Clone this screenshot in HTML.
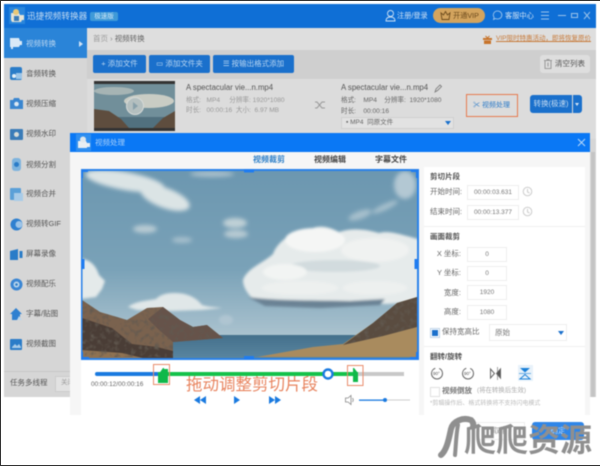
<!DOCTYPE html>
<html lang="zh"><head><meta charset="utf-8"><title>视频处理</title>
<style>
html,body{margin:0;padding:0}
body{width:600px;height:466px;position:relative;overflow:hidden;background:#fff;font-family:"Liberation Sans","Noto Sans CJK SC",sans-serif;color:#555}
#w{position:absolute;left:0;top:0;width:600px;height:466px;filter:blur(.4px)}
.a{position:absolute;white-space:nowrap}
.t{position:absolute;white-space:nowrap;line-height:12px;font-size:7.5px}
.btn{position:absolute;background:#1a70cc;border-radius:2px;color:#b9d6f2;font-size:7.5px;line-height:18px;text-align:center;top:55px;height:18px}
.nav{position:absolute;left:26px;font-size:7.5px;line-height:12px;color:#555;white-space:nowrap}
.ic{position:absolute;left:10px}
.inp{position:absolute;background:#fff;border:1px solid #eee;box-sizing:border-box;font-size:6.5px;color:#777;text-align:center}
.lab{position:absolute;white-space:nowrap;font-size:7.5px;color:#666;line-height:12px;text-align:right}
.h{position:absolute;left:430px;font-size:7.5px;font-weight:bold;color:#555;line-height:12px;white-space:nowrap}
</style></head><body>
<div id="w">
<!-- app -->
<div class="a" style="left:4px;top:4px;width:592px;height:393px;background:#d6d6d6"></div>
<div class="a" style="left:4px;top:4px;width:592px;height:24px;background:#0f6fd6"></div>
<div class="a" style="left:9px;top:7px;width:16px;height:17px;background:#2a86dc"></div>
<svg class="a" style="left:9px;top:7px" width="16" height="17"><path d="M2 6h8l1 2h4v5H13l-1 2H3l-1-2z" fill="#e4e4d8"/><circle cx="7" cy="5" r="3" fill="#e8c878"/><rect x="5" y="9" width="5" height="5" fill="#3a7cb8"/></svg>
<div class="t" style="left:27px;top:10px;font-size:8.6px;color:#c4dcf2">迅捷视频转换器</div>
<div class="a" style="left:90px;top:12px;width:28px;height:9px;background:#3f9ad8;border-radius:2px;color:#cfe6f5;font-size:6.5px;line-height:9px;text-align:center">极速版</div>

<svg class="a" style="left:385px;top:9px" width="12" height="14" fill="none" stroke="#cfe2f5" stroke-width=".9"><circle cx="5.500" cy="4.500" r="3"/><path d="M1 12c0-3 2-4 4.500-4s4.500 1 4.500 4z"/></svg>
<div class="t" style="left:397px;top:10px;color:#cfe2f5;font-size:7.2px">注册/登录</div>
<div class="a" style="left:433px;top:8px;width:52px;height:15px;border-radius:8px;background:#d3a45e"></div>
<svg class="a" style="left:440px;top:10px" width="11" height="11" fill="none" stroke="#6b4a1c" stroke-width=".9"><path d="M1 3l2.500 2L5.500 1.500 7.500 5 10 3 9 9.500H2z"/></svg>
<div class="t" style="left:453px;top:10px;color:#6b4a1c;font-size:7.2px">开通VIP</div>
<svg class="a" style="left:492px;top:10px" width="11" height="11" fill="none" stroke="#a9cdef" stroke-width=".8"><path d="M5.500 1a4.300 4 0 1 1-2 7.500L1.500 9.500l.6-2.200A4.300 4 0 0 1 5.500 1z"/></svg>
<div class="t" style="left:505px;top:10px;color:#cfe2f5;font-size:7.2px">客服中心</div>
<svg class="a" style="left:540px;top:10px" width="50" height="11" stroke="#9cc3ea" fill="none" stroke-width="1"><path d="M1 2h8M1 5.500h8M1 9h8M18 5.500h8"/><rect x="31.500" y="3.500" width="6" height="4"/><path d="M44 2l6 7M50 2l-6 7"/></svg>

<!-- sidebar -->
<div class="a" style="left:87px;top:28px;width:509px;height:22px;background:#dedede"></div>
<div class="a" style="left:87px;top:50px;width:509px;height:29px;background:#cfcfcf"></div>
<div class="a" style="left:87px;top:79px;width:509px;height:60px;background:#dcdcdc"></div>
<div class="a" style="left:4px;top:28px;width:83px;height:369px;background:#d6d6d6"></div>
<div class="a" style="left:4px;top:28px;width:83px;height:30px;background:#2a84d8"></div>
<svg class="a" style="left:9px;top:37px" width="13" height="13"><path d="M1 1h9l1 3h2v4h-2l-1 2H4v2H2v-2H1z" fill="#d9e9f7"/></svg>
<div class="nav" style="top:38px;color:#bcd7f0">视频转换</div>
<div class="a" style="left:79px;top:41px;width:0;height:0;border-left:4px solid #cfe2f5;border-top:3px solid transparent;border-bottom:3px solid transparent"></div>

<svg class="ic" style="top:67px" width="13" height="13"><rect width="12" height="13" rx="2" fill="#2a7cc8"/><rect x="6" y="6" width="6" height="6" fill="#9cc5e8"/><circle cx="4" cy="9" r="2" fill="#e4eef6"/></svg><div class="nav" style="top:68px">音频转换</div>
<svg class="ic" style="top:98px" width="13" height="11"><path d="M4 0h5l1 2h3v9H0V2h3z" fill="#3a86d0"/><circle cx="6.500" cy="6" r="2.300" fill="#dbe8f3"/></svg><div class="nav" style="top:98px">视频压缩</div>
<svg class="ic" style="top:128px" width="13" height="13"><rect y="1" width="13" height="11" rx="1" fill="#3a7cb8"/><circle cx="6.500" cy="6.500" r="2.500" fill="#d8dcd8"/></svg><div class="nav" style="top:128px">视频水印</div>
<svg class="ic" style="top:158px" width="13" height="13"><rect x="2" y="0" width="9" height="13" rx="3" fill="#7fb4de"/><circle cx="6.500" cy="6.500" r="2.500" fill="#2a7cc8"/></svg><div class="nav" style="top:159px">视频分割</div>
<svg class="ic" style="top:188px" width="13" height="13"><rect width="11" height="12" rx="1" fill="#5ba0d8"/><rect x="4" y="5" width="9" height="8" fill="#a8cbe8"/></svg><div class="nav" style="top:188px">视频合并</div>
<svg class="ic" style="top:218px" width="13" height="13"><circle cx="6.500" cy="6.500" r="6" fill="#2f80d0"/><circle cx="9" cy="6.500" r="3.500" fill="#9cc4e8"/></svg><div class="nav" style="top:218px">视频转GIF</div>
<svg class="ic" style="top:249px" width="13" height="11"><path d="M0 2l8-2v11H0z" fill="#2a7cc8"/><rect x="9.500" y="2" width="3" height="7" fill="#2a7cc8"/></svg><div class="nav" style="top:248px">屏幕录像</div>
<svg class="ic" style="top:278px" width="13" height="13"><circle cx="6.500" cy="6.500" r="6" fill="#3a86d4"/><circle cx="6.500" cy="6.500" r="3" fill="#bcd6ec"/><circle cx="6.500" cy="6.500" r="1.300" fill="#2a7cc8"/></svg><div class="nav" style="top:278px">视频配乐</div>
<svg class="a" style="left:9px;top:307px" width="14" height="14"><path d="M7 1l6 6h-2v6H3V7H1z" fill="#2f80d0"/><path d="M10 9l3 4H8z" fill="#bcd6ec"/></svg><div class="nav" style="top:308px">字幕/贴图</div>
<svg class="ic" style="top:338px" width="13" height="13"><rect y="1" width="12" height="11" rx="1" fill="#2a7cc8"/><path d="M2 9l3-3 2 2 2-2 2 3v1H2z" fill="#a8cbe8"/></svg><div class="nav" style="top:338px">视频截图</div>
<div class="a" style="left:4px;top:371px;width:83px;height:1px;background:#c6c6c6"></div>
<div class="t" style="left:10px;top:377px">任务多线程</div>
<div class="a" style="left:55px;top:376px;width:20px;height:14px;background:#e2e2e2;border:1px solid #ccc"></div>
<div class="t" style="left:61px;top:377px;color:#999;font-size:6.500px">关闭</div>

<!-- main head -->
<div class="t" style="left:93px;top:33px;color:#9a9a9a">首页 <span style="color:#888">›</span> <span style="color:#666">视频转换</span></div>
<div class="btn" style="left:93px;width:53px">+ 添加文件</div>
<div class="btn" style="left:149px;width:61px">▭ 添加文件夹</div>
<div class="btn" style="left:213px;width:81px">☰ 按输出格式添加</div>
<div class="a" style="left:540px;top:55px;width:50px;height:18px;background:#dedede;border-radius:3px"></div>
<svg class="a" style="left:544px;top:59px" width="8" height="10" fill="none" stroke="#888" stroke-width=".8"><path d="M0 1.500h8M3 1.500V.5h2v1M1 1.500v8h6v-8M4 3.500v4"/></svg>
<div class="t" style="left:555px;top:58px;color:#555">清空列表</div>
<svg class="a" style="left:483px;top:35px" width="9" height="9"><path d="M0 3h9v2H0zM1 5.500h7V9H1z" fill="#c8742a"/><path d="M2.500 1l2 2 2-2" fill="none" stroke="#c8742a"/></svg>
<div class="t" style="left:496px;top:33px;color:#c77a3a;font-size:6.500px;text-decoration:underline">VIP限时特惠活动，即将恢复原价</div>

<!-- list item -->
<svg class="a" style="left:94px;top:81px" width="81" height="50"><rect width="81" height="50" fill="#718f9a"/><rect width="81" height="3" fill="#333"/><rect y="47" width="81" height="3" fill="#333"/><ellipse cx="55" cy="20" rx="25" ry="7" fill="#c9ccc4"/><ellipse cx="20" cy="10" rx="20" ry="4" fill="#a6b4b4"/><rect y="36" width="81" height="11" fill="#51707e"/><path d="M0 28l15 2 12 8 8 9H0zM81 30l-12 7-10 10h22z" fill="#5e4d3e"/><circle cx="41" cy="25" r="8.500" fill="#b4bfbf" stroke="#d6dad8"/><path d="M39 21v8l5-4z" fill="#88a0aa"/></svg>
<div class="t" style="left:186px;top:82px;font-size:7.800px;color:#555">A spectacular vie...n.mp4</div>
<div class="t" style="left:186px;top:95px;font-size:6.600px;color:#999">格式: &nbsp;&nbsp;MP4 &nbsp;&nbsp;&nbsp;&nbsp;分辨率: 1920*1080</div>
<div class="t" style="left:186px;top:105px;font-size:6.600px;color:#999">时长: &nbsp;&nbsp;00:00:16 &nbsp;大小: &nbsp;6.97 MB</div>
<svg class="a" style="left:314px;top:100px" width="12" height="10" stroke="#999" fill="none"><path d="M1 2h2l5 6h3M1 8h2l5-6h3"/></svg>
<div class="t" style="left:341px;top:82px;font-size:7.800px;color:#555">A spectacular vie...n.mp4</div>
<svg class="a" style="left:434px;top:84px" width="8" height="9" fill="none" stroke="#777" stroke-width=".8"><path d="M1 8l1-3 4-4 1.500 1.500-4 4z"/></svg>
<div class="t" style="left:341px;top:95px;font-size:6.600px;color:#666">格式: &nbsp;&nbsp;&nbsp;MP4 &nbsp;&nbsp;&nbsp;分辨率: &nbsp;1920*1080</div>
<div class="t" style="left:341px;top:106px;font-size:6.600px;color:#666">时长: &nbsp;&nbsp;&nbsp;00:00:16</div>
<div class="a" style="left:341px;top:117px;width:113px;height:12px;background:#e2e2e2;border:1px solid #d0d0d0;box-sizing:border-box;font-size:6.500px;line-height:10px;color:#666;padding-left:4px">▪ MP4 &nbsp;同原文件</div>
<div class="a" style="left:445px;top:121px;border-top:4px solid #1a70cc;border-left:3px solid transparent;border-right:3px solid transparent"></div>
<div class="a" style="left:466px;top:94px;width:52px;height:23px;box-sizing:border-box;border:1px solid #e77a50;color:#2d7bc8;font-size:7px;line-height:21px;padding-left:6px">✂ 视频处理</div>
<div class="a" style="left:530px;top:95px;width:42px;height:18px;background:#1a70cc;border-radius:3px 0 0 3px;color:#c5dcf2;font-size:7.500px;line-height:18px;text-align:center">转换(极速)</div>
<div class="a" style="left:573px;top:95px;width:9px;height:18px;background:#1a70cc;border-radius:0 3px 3px 0"></div>
<div class="a" style="left:575px;top:103px;border-top:3px solid #d5e6f5;border-left:2.500px solid transparent;border-right:2.500px solid transparent"></div>
<div class="a" style="left:591px;top:152px;width:4px;height:245px;background:#c4c4c4"></div>

<!-- dialog -->
<div class="a" style="left:70px;top:133px;width:520px;height:282px;background:#f6f6f6"></div>
<div class="a" style="left:70px;top:133px;width:520px;height:19px;background:#0a78f5"></div>
<div class="a" style="left:76px;top:134px;width:15px;height:17px;background:#2f8ff0"></div>
<svg class="a" style="left:76px;top:135px" width="15" height="15"><path d="M2 6h8l1 2h3v4h-3v1H2z" fill="#e8eef2"/><circle cx="7" cy="4.500" r="3" fill="#dfe7ec"/></svg>
<div class="t" style="left:95px;top:137px;color:#a8d0fa;font-size:7.500px">视频处理</div>
<svg class="a" style="left:577px;top:138px" width="9" height="9" stroke="#b6d8fb"><path d="M1 1l7 7M8 1l-7 7"/></svg>
<div class="t" style="left:253px;top:154px;font-size:8px;font-weight:bold;color:#2f80c8">视频裁剪</div>
<div class="t" style="left:314px;top:154px;font-size:8px;font-weight:bold;color:#444">视频编辑</div>
<div class="t" style="left:375px;top:154px;font-size:8px;font-weight:bold;color:#444">字幕文件</div>
<div class="a" style="left:81px;top:359px;width:338px;height:56px;background:#fff"></div>

<!-- video -->
<svg class="a" style="left:81px;top:169px" width="338" height="191" viewBox="81 169 338 191">
<defs>
<linearGradient id="s" x1="0" y1="0" x2="0" y2="1"><stop offset="0" stop-color="#6c97b0"/><stop offset=".6" stop-color="#7aa2b8"/><stop offset="1" stop-color="#abc3cf"/></linearGradient>
<filter id="b1" x="-30%" y="-30%" width="160%" height="160%"><feGaussianBlur stdDeviation="2"/></filter>
<filter id="b2" x="-30%" y="-30%" width="160%" height="160%"><feGaussianBlur stdDeviation="1.200"/></filter>
<filter id="n" x="0" y="0" width="100%" height="100%"><feTurbulence type="fractalNoise" baseFrequency=".2" numOctaves="2" seed="4"/><feColorMatrix values="0 0 0 0 .12  0 0 0 0 .1  0 0 0 0 .08  2.600 0 0 0 -1.250"/><feComposite in2="SourceGraphic" operator="in"/></filter>
<linearGradient id="wg" x1="0" y1="0" x2="0" y2="1"><stop offset="0" stop-color="#44708c"/><stop offset="1" stop-color="#5a86a0"/></linearGradient>
</defs>
<rect x="81" y="169" width="338" height="167" fill="url(#s)"/>
<g filter="url(#b1)" fill="#dbe4e5">
<ellipse cx="125" cy="181" rx="40" ry="9" transform="rotate(10 125 181)"/>
<ellipse cx="165" cy="198" rx="26" ry="10" transform="rotate(20 165 198)"/>
<ellipse cx="212" cy="174" rx="22" ry="3" fill="#a9c0cc"/>
<ellipse cx="145" cy="229" rx="12" ry="4" fill="#b7cad3"/>
<ellipse cx="182" cy="240" rx="10" ry="3" fill="#a6bfcc"/>
<ellipse cx="235" cy="223" rx="12" ry="5" fill="#bfd0d6"/>
<ellipse cx="236" cy="234" rx="12" ry="4" fill="#b7cad3"/>
<ellipse cx="405" cy="185" rx="11" ry="14" fill="#b3c8d3"/>
<ellipse cx="360" cy="215" rx="12" ry="4" fill="#a6bfcc" transform="rotate(-20 360 215)"/>
<ellipse cx="385" cy="207" rx="14" ry="3" fill="#a6bfcc" transform="rotate(-25 385 207)"/>
</g>
<g filter="url(#b2)">
<path d="M243 280c4-12 22-18 30-26 4-12 20-24 36-24 10-6 20-3 30 2 14-5 30-2 40 1 10-3 24 2 46 8v60l-38 3-50-2-48 1-34-3c-6-4-12-12-12-20z" fill="#e6ebeb"/>
<ellipse cx="315" cy="240" rx="30" ry="12" fill="#f5f6f5"/>
<ellipse cx="375" cy="250" rx="34" ry="12" fill="#f0f2f1"/>
<ellipse cx="335" cy="266" rx="45" ry="6" fill="#d2dbde"/>
<ellipse cx="285" cy="272" rx="22" ry="8" fill="#f2f4f3"/>
<ellipse cx="300" cy="288" rx="38" ry="7" fill="#edf0ef"/>
<ellipse cx="375" cy="288" rx="32" ry="7" fill="#edf0ef"/>
<path d="M248 297c30 4 70 3 102 4l35-2-5 6-60 3-55-2z" fill="#6a8294"/>
<path d="M81 259c8 0 15 6 18 16l6 6-3 8-6 8-15 2z" fill="#e4eaea"/>
<path d="M128 307c8-6 18-6 28-8 6-6 14-6 20-6 10 0 20 4 26 12 6 2 12 2 20 3l-20 2-30 1-35-1z" fill="#e0e7e8"/>
<ellipse cx="226" cy="320" rx="7" ry="5" fill="#afc5d1"/>
</g>
<rect x="81" y="335" width="338" height="24" fill="url(#wg)"/>
<path d="M82 300l18 12 27 8 20-12 16-1 17 13 13 7 14-2 16 13-50 4v15H82z" fill="#7a624e"/>
<path d="M148 319l15-12 17 13 13 7 14-2 16 13-50 4-15-13z" fill="#66534a"/>
<path d="M82 318l30 10 20 16 25 3 16 4v8H82z" fill="#4a3d36"/>
<path d="M82 350l40 3 25 6H82z" fill="#8f7252"/>
<path d="M257 357l56-10 30-3 30-21 24-20 20-6v60z" fill="#a98b5e"/>
<path d="M343 345l30-22 24-20 20-6v30l-34 9z" fill="#5a4c40"/>
<path d="M82 300l18 12 27 8 20-12 16-1 17 13 13 7 14-2 16 13-50 4v15H82z" filter="url(#n)"/>
<path d="M343 345l30-22 24-20 20-6v30l-34 9z" filter="url(#n)"/>
<rect x="81.500" y="170" width="336.500" height="189" fill="none" stroke="#2a82ea" stroke-width="2"/>
<path d="M81 170h7v2h-5v6h-2zM411 170h7v8h-2v-6h-5zM81 359v-7h2v5h6v2zM418 359v-7h-2v5h-6v2z" fill="#1f7cf0"/>
<rect x="244" y="169" width="10" height="3.500" fill="#1f7cf0"/><rect x="244" y="356" width="10" height="3.500" fill="#1f7cf0"/>
<rect x="81" y="259" width="3.500" height="10" fill="#1f7cf0"/><rect x="414.500" y="259" width="3.500" height="10" fill="#1f7cf0"/>
</svg>

<!-- timeline -->
<svg class="a" style="left:81px;top:359px" width="338" height="56" viewBox="81 359 338 56">
<rect x="95" y="372" width="64" height="4" rx="2" fill="#1a7ae0"/>
<rect x="158" y="372" width="200" height="4" fill="#14c24a"/>
<rect x="358" y="372" width="46" height="4" fill="#c8c8c8"/>
<circle cx="328" cy="374" r="4.500" fill="#fff" stroke="#1a7ae0" stroke-width="2.400"/>
<path d="M158 375l5-7h1v1h4v14h-10z" fill="#10b84a"/>
<path d="M353 382v-14h1l4 5v9z" fill="#10b84a"/>
<rect x="153.500" y="364.500" width="16" height="20" fill="none" stroke="#e98d6c"/>
<rect x="347.500" y="365.500" width="15.500" height="20" fill="none" stroke="#e98d6c"/>
<path d="M200 396v8l-6-4zM206 396v8l-6-4z" fill="#1a7ae0"/>
<path d="M234 396l6 4-6 4z" fill="#1a7ae0"/>
<path d="M269 396l6 4-6 4zM275 396l6 4-6 4z" fill="#1a7ae0"/>
<path d="M345.500 398h2.500l3-2.500v9l-3-2.500h-2.500z" fill="none" stroke="#888" stroke-width=".8"/><path d="M352.500 398q1.500 2 0 4" fill="none" stroke="#888" stroke-width=".8"/>
<rect x="359" y="399.500" width="26" height="1.300" fill="#1a7ae0"/><rect x="385" y="399.500" width="25" height="1" fill="#ccc"/><circle cx="385" cy="400" r="2" fill="#1a7ae0"/>
</svg>
<div class="t" style="left:91px;top:379px;font-size:6.500px;color:#666">00:00:12/00:00:16</div>
<div class="t" style="left:186px;top:376px;font-size:16.500px;line-height:18px;color:#e8845f">拖动调整剪切片段</div>

<!-- right panel -->
<div class="a" style="left:424px;top:167px;width:161px;height:248px;background:#fff"></div>
<div class="a" style="left:424px;top:226px;width:161px;height:1px;background:#f0f0f0"></div>
<div class="a" style="left:424px;top:346px;width:161px;height:1px;background:#f0f0f0"></div>
<div class="h" style="top:171px">剪切片段</div>
<div class="lab" style="left:430px;top:186px">开始时间:</div>
<div class="inp" style="left:467px;top:185px;width:52px;height:15px;line-height:13px">00:00:03.631</div>
<svg class="a" style="left:522px;top:186px" width="11" height="11" fill="none" stroke="#ccc"><circle cx="5.500" cy="5.500" r="4.300"/><path d="M5.500 3v3l2 1"/></svg>
<div class="lab" style="left:430px;top:206px">结束时间:</div>
<div class="inp" style="left:467px;top:205px;width:52px;height:15px;line-height:13px">00:00:13.377</div>
<svg class="a" style="left:522px;top:206px" width="11" height="11" fill="none" stroke="#ccc"><circle cx="5.500" cy="5.500" r="4.300"/><path d="M5.500 3v3l2 1"/></svg>
<div class="h" style="top:231px">画面裁剪</div>
<div class="lab" style="left:436px;width:25px;top:248px">X 坐标:</div>
<div class="inp" style="left:467px;top:247px;width:40px;height:15px;line-height:13px">0</div>
<div class="lab" style="left:436px;width:25px;top:267px">Y 坐标:</div>
<div class="inp" style="left:467px;top:266px;width:40px;height:15px;line-height:13px">0</div>
<div class="lab" style="left:436px;width:25px;top:287px">宽度:</div>
<div class="inp" style="left:467px;top:285px;width:40px;height:15px;line-height:13px">1920</div>
<div class="lab" style="left:436px;width:25px;top:306px">高度:</div>
<div class="inp" style="left:467px;top:305px;width:40px;height:15px;line-height:13px">1080</div>
<div class="a" style="left:430px;top:328px;width:8px;height:8px;border:1px solid #c0d4e8;box-sizing:content-box"></div>
<div class="a" style="left:432px;top:330px;width:6px;height:6px;background:#1a70cc"></div>
<div class="lab" style="left:442px;top:326px">保持宽高比</div>
<div class="inp" style="left:489px;top:324px;width:78px;height:17px;line-height:15px;text-align:left;padding-left:5px;font-size:7.500px">原始</div>
<div class="a" style="left:558px;top:331px;border-top:4px solid #1a70cc;border-left:3px solid transparent;border-right:3px solid transparent"></div>
<div class="h" style="top:351px">翻转/旋转</div>
<div class="a" style="left:518px;top:365px;width:15px;height:16px;background:#e8f2fa"></div>
<svg class="a" style="left:430px;top:366px" width="110" height="15" fill="none" stroke="#666" stroke-width="1"><circle cx="7" cy="7.500" r="5.500" stroke-dasharray="24 4"/><circle cx="38" cy="7.500" r="5.500" stroke-dasharray="24 4"/><path d="M60.500 3v9l4-4.500z"/><path d="M67.500 1v13" stroke-width=".6"/><path d="M70.500 3v9l-4-4.500z" fill="#555"/><path d="M90 2h10l-5 4.500z" fill="#1a80d8" stroke="none"/><path d="M90 13h10l-5-4.500z" fill="none" stroke="#1a80d8"/><path d="M89 7.500h12" stroke="#1a80d8" stroke-width=".6"/></svg>
<div class="t" style="left:433px;top:368px;font-size:4.500px;color:#555">90°</div>
<div class="t" style="left:464px;top:368px;font-size:4.500px;color:#555">90°</div>
<div class="a" style="left:430px;top:387px;width:8px;height:8px;border:1px solid #e0e0e0"></div>
<div class="lab" style="left:442px;top:385px;font-weight:bold;color:#777">视频倒放</div>
<div class="lab" style="left:477px;top:385px;font-size:6.400px;color:#aaa">(将在转换后生效)</div>
<div class="lab" style="left:430px;top:398px;font-size:6px;color:#bbb">*剪辑操作后、格式转换将不支持闪电模式</div>

<!-- footer behind watermark -->
<div class="a" style="left:475px;top:422px;width:50px;height:18px;border:1px solid #eee;box-sizing:border-box;color:#999;font-size:7.500px;line-height:16px;text-align:center">取消</div>
<div class="a" style="left:532px;top:422px;width:52px;height:18px;background:#2f86e8;border-radius:3px;color:#b8d8f5;font-size:7.500px;line-height:18px;text-align:center">确定</div>

<!-- watermark -->
<svg class="a" style="left:438px;top:414px" width="40" height="48" fill="none" stroke="#8f8f8f" stroke-linecap="round"><path d="M3 41C9 36 11 24 13 15 15 7 25 3 33 6c2 2 3 4 2 7" stroke-width="6"/><path d="M20 11c-2 10-2 20-3 30" stroke-width="4"/></svg>
<div class="a" style="left:464px;top:420px;font-size:32px;line-height:40px;font-weight:bold;color:#8f8f8f;font-family:'Liberation Sans','Noto Sans CJK SC',sans-serif">爬爬资源</div>
</div>
<div class="a" style="left:0;top:0;width:600px;height:1px;background:#333"></div>
<div class="a" style="left:0;top:465px;width:600px;height:1px;background:#333"></div>
<div class="a" style="left:0;top:0;width:1px;height:466px;background:#333"></div>
</body></html>
